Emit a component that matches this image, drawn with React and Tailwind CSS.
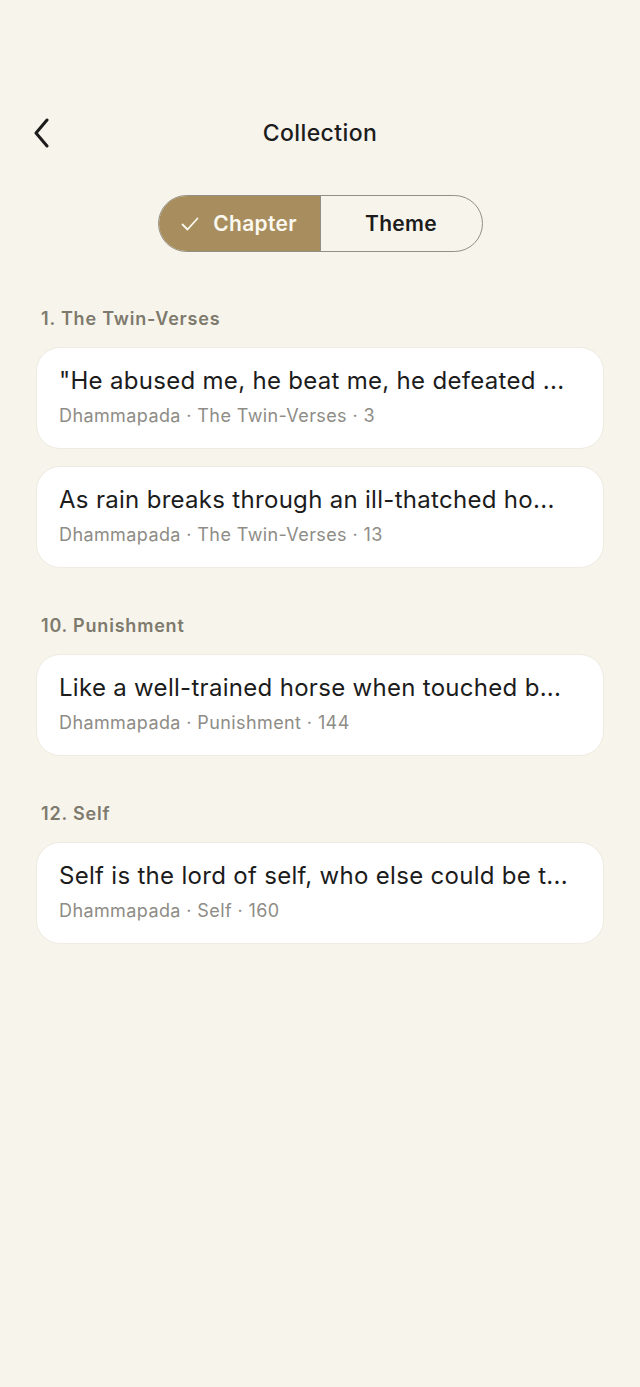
import React, { useState } from 'react';

const sections = [
  {
    title: '1. The Twin-Verses',
    items: [
      { text: '"He abused me, he beat me, he defeated ...', meta: 'Dhammapada · The Twin-Verses · 3' },
      { text: 'As rain breaks through an ill-thatched ho...', meta: 'Dhammapada · The Twin-Verses · 13' },
    ],
  },
  {
    title: '10. Punishment',
    items: [
      { text: 'Like a well-trained horse when touched b...', meta: 'Dhammapada · Punishment · 144' },
    ],
  },
  {
    title: '12. Self',
    items: [
      { text: 'Self is the lord of self, who else could be t...', meta: 'Dhammapada · Self · 160' },
    ],
  },
];

const App = () => {
  const [mode, setMode] = useState('chapter');

  return (
    <div className="min-h-[1387px] bg-[#f7f4ec] font-['Inter',sans-serif] text-[#1c1c1c]">
      <header className="relative flex items-center justify-center pt-[117px] h-[148px]">
        <button type="button" className="absolute left-[31px] top-[116px] p-[2px]">
          <svg width="16" height="30" viewBox="0 0 16 30" fill="none">
            <path d="M14 2 L3 15 L14 28" stroke="#1c1c1c" strokeWidth="3" strokeLinecap="round" strokeLinejoin="round" />
          </svg>
        </button>
        <h1 className="text-[23px] font-medium leading-[30px] tracking-[0.4px] mt-[1px]">Collection</h1>
      </header>

      <div className="flex justify-center mt-[47px]">
        <div className="flex h-[57px] w-[325px] rounded-full border-[1.5px] border-[#948f85] overflow-hidden">
          <button
            type="button"
            onClick={() => setMode('chapter')}
            className={`flex-1 flex items-center justify-center gap-[14px] text-[21px] font-semibold tracking-[0.3px] border-r-[1.5px] border-[#948f85] ${mode === 'chapter' ? 'bg-[#a88e5e] text-[#fbf8f0]' : 'text-[#1c1c1c]'}`}
          >
            {mode === 'chapter' && (
              <svg width="18" height="14" viewBox="0 0 18 14" fill="none">
                <path d="M1.5 7.5 L6.5 12.5 L16.5 1.5" stroke="currentColor" strokeWidth="1.8" strokeLinecap="round" strokeLinejoin="round" />
              </svg>
            )}
            Chapter
          </button>
          <button
            type="button"
            onClick={() => setMode('theme')}
            className={`flex-1 flex items-center justify-center text-[21px] font-semibold tracking-[0.3px] ${mode === 'theme' ? 'bg-[#a88e5e] text-[#fbf8f0]' : 'text-[#1c1c1c]'}`}
          >
            Theme
          </button>
        </div>
      </div>

      <main className="px-[36px] pt-[56px] flex flex-col gap-[47px]">
        {sections.map((section) => (
          <section key={section.title}>
            <h2 className="pl-[5px] text-[18px] font-semibold leading-[22px] tracking-[0.8px] text-[#7e7a6d] mb-[17px]">{section.title}</h2>
            <div className="flex flex-col gap-[17px]">
              {section.items.map((item) => (
                <div key={item.meta} className="bg-white rounded-[24px] border border-[#efebe2] px-[22px] pt-[19px] pb-[20px]">
                  <p className="text-[24px] leading-[28px] tracking-[0.3px] truncate">{item.text}</p>
                  <p className="mt-[9px] text-[18px] leading-[24px] tracking-[0.4px] text-[#8e8c86]">{item.meta}</p>
                </div>
              ))}
            </div>
          </section>
        ))}
      </main>
    </div>
  );
};

export default App;
